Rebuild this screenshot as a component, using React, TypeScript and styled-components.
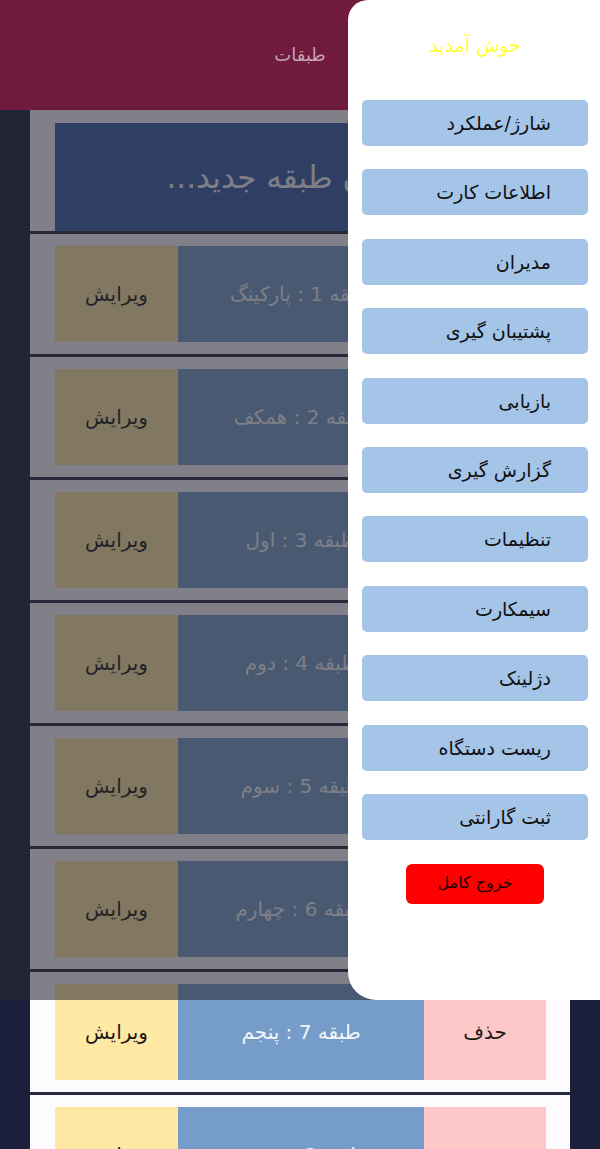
import React from "react";
import styled, { createGlobalStyle } from "styled-components";

const GlobalStyle = createGlobalStyle`
  html, body {
    margin: 0;
    padding: 0;
    background: #1c1f3c;
  }
  body {
    font-family: "DejaVu Sans", "Noto Sans", sans-serif;
    direction: rtl;
  }
  * {
    box-sizing: border-box;
  }
`;

const Page = styled.div`
  position: relative;
  width: 600px;
  height: 1149px;
  overflow: hidden;
  background: #1c1f3c;
`;

const Header = styled.header`
  height: 110px;
  background: #701b3e;
  display: flex;
  align-items: center;
  justify-content: center;
`;

const HeaderTitle = styled.h1`
  margin: 0 0 2px;
  font-size: 18px;
  font-weight: normal;
  color: rgba(255, 255, 255, 0.6);
`;

const List = styled.main`
  margin: 0 30px;
  background: #fdfbfe;
  display: flex;
  flex-direction: column;
`;

const NewFloorWrap = styled.div`
  padding: 13px 24px 0 25px;
`;

const NewFloorInput = styled.div`
  height: 108px;
  background: #3860a8;
  display: flex;
  align-items: center;
  justify-content: center;
  font-size: 31px;
  color: #f4f6fa;
`;

const Card = styled.section`
  border-top: 3px solid #262a40;
  padding: 12px 24px 12px 25px;
`;

const Row = styled.div`
  height: 96px;
  display: grid;
  grid-template-columns: 122px 246px 123px;
`;

interface CellProps {
  $tone: "del" | "name" | "edit";
}

const cellBg = { del: "#ffc8c8", name: "#769dc9", edit: "#ffe8a3" };
const cellFg = { del: "#1a1a1a", name: "#f2f5fa", edit: "#1a1a1a" };

const Cell = styled.div<CellProps>`
  display: flex;
  align-items: center;
  justify-content: center;
  font-size: 20px;
  background: ${(p) => cellBg[p.$tone]};
  color: ${(p) => cellFg[p.$tone]};
`;

// dims the floor list while the drawer is open
const Overlay = styled.div`
  position: absolute;
  top: 110px;
  left: 0;
  right: 0;
  height: 890px;
  background: rgba(40, 40, 50, 0.58);
`;

const Drawer = styled.aside`
  position: absolute;
  top: 0;
  right: 0;
  width: 252px;
  height: 1000px;
  background: #ffffff;
  border-top-left-radius: 20px;
  border-bottom-left-radius: 28px;
  padding: 0 12px 0 14px;
  display: flex;
  flex-direction: column;
`;

const Welcome = styled.div`
  height: 100px;
  padding-top: 34px;
  display: flex;
  justify-content: center;
  font-size: 19px;
  color: #ffff3a;
`;

const MenuList = styled.nav`
  display: flex;
  flex-direction: column;
  gap: 23.4px;
`;

const MenuButton = styled.div`
  height: 46px;
  border-radius: 5px;
  background: #a4c4e8;
  display: flex;
  align-items: center;
  padding-right: 37px;
  font-size: 19px;
  color: #111;
`;

const ExitButton = styled.div`
  align-self: center;
  margin-top: 24px;
  width: 138px;
  height: 40px;
  border-radius: 6px;
  background: #ff0000;
  display: flex;
  align-items: center;
  justify-content: center;
  padding-bottom: 3px;
  font-size: 16px;
  color: #1e0202;
`;

const floors = [
  "طبقه 1 : پارکینگ",
  "طبقه 2 : همکف",
  "طبقه 3 : اول",
  "طبقه 4 : دوم",
  "طبقه 5 : سوم",
  "طبقه 6 : چهارم",
  "طبقه 7 : پنجم",
  "طبقه 8 : ششم",
];

const menu = [
  "شارژ/عملکرد",
  "اطلاعات کارت",
  "مدیران",
  "پشتیبان گیری",
  "بازیابی",
  "گزارش گیری",
  "تنظیمات",
  "سیمکارت",
  "دژلینک",
  "ریست دستگاه",
  "ثبت گارانتی",
];

const App = () => (
  <Page>
    <GlobalStyle />
    <Header>
      <HeaderTitle>طبقات</HeaderTitle>
    </Header>
    <List>
      <NewFloorWrap>
        <NewFloorInput>افزودن طبقه جدید...</NewFloorInput>
      </NewFloorWrap>
      {floors.map((f) => (
        <Card key={f}>
          <Row>
            <Cell $tone="del">حذف</Cell>
            <Cell $tone="name">{f}</Cell>
            <Cell $tone="edit">ویرایش</Cell>
          </Row>
        </Card>
      ))}
    </List>
    <Overlay />
    <Drawer>
      <Welcome>خوش آمدید</Welcome>
      <MenuList>
        {menu.map((m) => (
          <MenuButton key={m}>{m}</MenuButton>
        ))}
      </MenuList>
      <ExitButton>خروج کامل</ExitButton>
    </Drawer>
  </Page>
);

export default App;
